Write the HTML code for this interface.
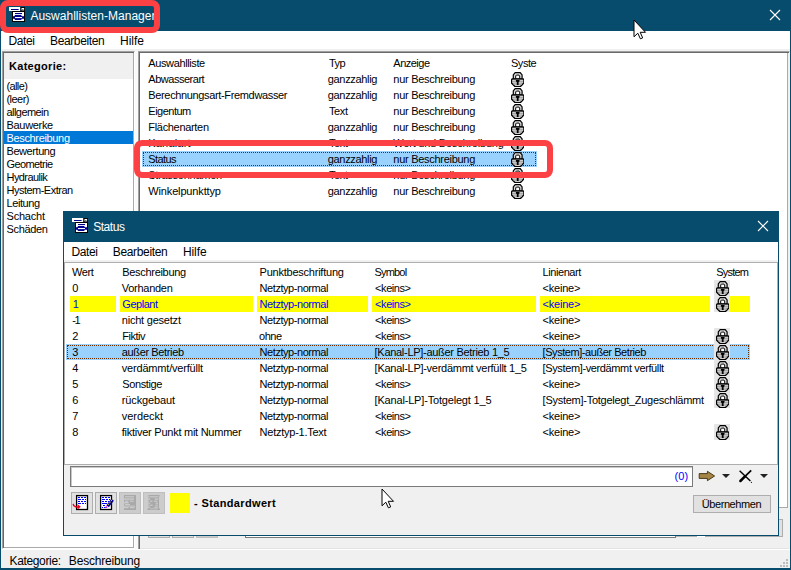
<!DOCTYPE html>
<html lang="de"><head><meta charset="utf-8"><title>Auswahllisten-Manager</title>
<style>
html,body{margin:0;padding:0}
body{width:791px;height:570px;overflow:hidden;position:relative;background:#f0f0f0;font-family:"Liberation Sans",sans-serif;color:#000}
div,svg{position:absolute;box-sizing:border-box}
.t{white-space:nowrap}
.l{font-size:11px;line-height:16px;height:16px}
.k{font-size:11px;line-height:13px;height:13px}
.m{font-size:12px;line-height:20px;height:20px}
.tt{font-size:12px;line-height:31px;height:31px;color:#fff}
.b{font-weight:bold}
.blue{color:#0000ff}
.sunk{border:1px solid;border-color:#a0a0a0 #fff #fff #a0a0a0;box-shadow:inset 1px 1px 0 #696969,inset -1px -1px 0 #e3e3e3;background:#fff}
.btn{background:#e1e1e1;border:1px solid #adadad}
.btnd{background:#cccccc;border:1px solid #bfbfbf}
.y{background:#ffff00;height:16px}
</style></head><body>

<div style="left:0;top:0;width:791px;height:570px;border:1px solid #084c6d;border-top:0;border-bottom-width:2px"></div>
<div style="left:0;top:0;width:791px;height:31px;background:#084c6d"></div>
<svg style="left:9.4px;top:7.2px" width="16" height="15" viewBox="0 0 16 15">
<rect x="0" y="0" width="11.2" height="4" fill="#fff"/>
<rect x="2" y="2" width="7.6" height="1" fill="#00008b"/>
<rect x="11.5" y="0" width="4.5" height="4.2" fill="#000"/><rect x="12.5" y="1" width="2.6" height="2.4" fill="#fff"/><rect x="13.5" y="2" width="0.8" height="1" fill="#000"/>
<rect x="3" y="4" width="13" height="11" fill="#000"/>
<rect x="4" y="5" width="11" height="9" fill="#fff"/>
<rect x="6" y="6" width="7" height="1.1" fill="#00008b"/>
<path d="M6.2 8 H12 L13 9.2 H15 V11.8 H13 L12 13 H6.2 L5.2 11.8 H4 V9.2 H5.2 Z" fill="#00008b"/>
<rect x="6" y="10" width="7" height="1.1" fill="#fff"/>
</svg>
<div class="t tt" style="left:30.40px;top:1px;letter-spacing:0.018px;">Auswahllisten-Manager</div>
<svg style="left:769px;top:9px" width="12" height="12" viewBox="0 0 12 12"><path d="M1 1 L11 11 M11 1 L1 11" stroke="#fff" stroke-width="1.1" fill="none"/></svg>
<div style="left:1px;top:31px;width:789px;height:18px;background:#fff"></div>
<div class="t m" style="left:8.60px;top:31px;letter-spacing:-0.437px;">Datei</div>
<div class="t m" style="left:50.00px;top:31px;letter-spacing:-0.374px;">Bearbeiten</div>
<div class="t m" style="left:120.00px;top:31px;letter-spacing:-0.033px;">Hilfe</div>
<div style="left:2px;top:51px;width:133px;height:498px;background:#fff;border:1px solid;border-color:#a0a0a0 #fff #fff #a0a0a0;box-shadow:inset 1px 1px 0 #696969,inset -1px -1px 0 #aaa"></div>
<div style="left:4px;top:53px;width:129px;height:26px;background:#f0f0f0"></div>
<div class="t l b" style="left:9.00px;top:58px;letter-spacing:0.296px;">Kategorie:</div>
<div class="t k" style="left:6.50px;top:80px;letter-spacing:-0.617px;">(alle)</div>
<div class="t k" style="left:6.50px;top:93px;letter-spacing:-0.541px;">(leer)</div>
<div class="t k" style="left:6.50px;top:106px;letter-spacing:-0.558px;">allgemein</div>
<div class="t k" style="left:6.50px;top:119px;letter-spacing:-0.314px;">Bauwerke</div>
<div style="left:4px;top:131px;width:129px;height:13px;background:#0078d7"></div>
<div class="t k" style="left:6.50px;top:132px;letter-spacing:-0.341px;color:#fff">Beschreibung</div>
<div class="t k" style="left:6.50px;top:145px;letter-spacing:-0.434px;">Bewertung</div>
<div class="t k" style="left:6.50px;top:158px;letter-spacing:-0.592px;">Geometrie</div>
<div class="t k" style="left:6.50px;top:171px;letter-spacing:-0.568px;">Hydraulik</div>
<div class="t k" style="left:6.50px;top:184px;letter-spacing:-0.510px;">Hystem-Extran</div>
<div class="t k" style="left:6.50px;top:197px;letter-spacing:-0.412px;">Leitung</div>
<div class="t k" style="left:6.50px;top:210px;letter-spacing:-0.198px;">Schacht</div>
<div class="t k" style="left:6.50px;top:223px;letter-spacing:-0.335px;">Schäden</div>
<div style="left:135px;top:51px;width:3px;height:498px;background:#fafafa"></div>
<div style="left:138px;top:51px;width:652px;height:499px;background:#f0f0f0;border:1px solid;border-color:#a0a0a0 #f0f0f0 #fff #a0a0a0;box-shadow:inset 1px 1px 0 #696969,inset 0 -1px 0 #e3e3e3"></div>
<div style="left:140px;top:53px;width:648px;height:455px;background:#fff;border-right:1px solid #aaa;border-bottom:1px solid #aaa"></div>
<div class="t l" style="left:148.30px;top:55px;letter-spacing:-0.384px;">Auswahlliste</div>
<div class="t l" style="left:328.90px;top:55px;letter-spacing:-0.556px;">Typ</div>
<div class="t l" style="left:393.30px;top:55px;letter-spacing:-0.506px;">Anzeige</div>
<div class="t l" style="left:511.00px;top:55px;letter-spacing:-0.473px;">Syste</div>
<div class="t l" style="left:148.30px;top:71px;letter-spacing:-0.478px;">Abwasserart</div>
<div class="t l" style="left:327.80px;top:71px;letter-spacing:-0.331px;">ganzzahlig</div>
<div class="t l" style="left:393.30px;top:71px;letter-spacing:-0.280px;">nur Beschreibung</div>
<svg style="left:510.7px;top:71.7px" width="13.4" height="15.4" viewBox="0 0 13.4 15.4">
<path d="M2.3 7 V3 L4.2 0.6 H9.2 L11.1 3 V7 Z" fill="#d8d8d8" stroke="#000" stroke-width="1.2"/>
<path d="M4.7 7 V3.9 L5.4 3.1 H8 L8.7 3.9 V7 Z" fill="#fff" stroke="#000" stroke-width="1"/>
<path d="M1.2 6.8 H12.2 L12.9 8 V11 L11.2 12.9 L9.4 14.6 H4 L2.2 12.9 L0.5 11 V8 Z" fill="#989898" stroke="#000" stroke-width="1.3"/>
<path d="M1.3 8.6 H12.1 M1.3 10.3 H12.1 M2.6 12 H10.8 M4.2 13.5 H9.2" stroke="#dedede" stroke-width="0.8"/>
<path d="M4.9 8.1 H8.5 V9.4 L7.6 10 V12.9 H5.8 V10 L4.9 9.4 Z" fill="#000"/>
</svg>
<div class="t l" style="left:148.30px;top:87px;letter-spacing:-0.351px;">Berechnungsart-Fremdwasser</div>
<div class="t l" style="left:327.80px;top:87px;letter-spacing:-0.331px;">ganzzahlig</div>
<div class="t l" style="left:393.30px;top:87px;letter-spacing:-0.280px;">nur Beschreibung</div>
<svg style="left:510.7px;top:87.7px" width="13.4" height="15.4" viewBox="0 0 13.4 15.4">
<path d="M2.3 7 V3 L4.2 0.6 H9.2 L11.1 3 V7 Z" fill="#d8d8d8" stroke="#000" stroke-width="1.2"/>
<path d="M4.7 7 V3.9 L5.4 3.1 H8 L8.7 3.9 V7 Z" fill="#fff" stroke="#000" stroke-width="1"/>
<path d="M1.2 6.8 H12.2 L12.9 8 V11 L11.2 12.9 L9.4 14.6 H4 L2.2 12.9 L0.5 11 V8 Z" fill="#989898" stroke="#000" stroke-width="1.3"/>
<path d="M1.3 8.6 H12.1 M1.3 10.3 H12.1 M2.6 12 H10.8 M4.2 13.5 H9.2" stroke="#dedede" stroke-width="0.8"/>
<path d="M4.9 8.1 H8.5 V9.4 L7.6 10 V12.9 H5.8 V10 L4.9 9.4 Z" fill="#000"/>
</svg>
<div class="t l" style="left:148.30px;top:103px;letter-spacing:-0.501px;">Eigentum</div>
<div class="t l" style="left:328.90px;top:103px;letter-spacing:-0.339px;">Text</div>
<div class="t l" style="left:393.30px;top:103px;letter-spacing:-0.280px;">nur Beschreibung</div>
<svg style="left:510.7px;top:103.7px" width="13.4" height="15.4" viewBox="0 0 13.4 15.4">
<path d="M2.3 7 V3 L4.2 0.6 H9.2 L11.1 3 V7 Z" fill="#d8d8d8" stroke="#000" stroke-width="1.2"/>
<path d="M4.7 7 V3.9 L5.4 3.1 H8 L8.7 3.9 V7 Z" fill="#fff" stroke="#000" stroke-width="1"/>
<path d="M1.2 6.8 H12.2 L12.9 8 V11 L11.2 12.9 L9.4 14.6 H4 L2.2 12.9 L0.5 11 V8 Z" fill="#989898" stroke="#000" stroke-width="1.3"/>
<path d="M1.3 8.6 H12.1 M1.3 10.3 H12.1 M2.6 12 H10.8 M4.2 13.5 H9.2" stroke="#dedede" stroke-width="0.8"/>
<path d="M4.9 8.1 H8.5 V9.4 L7.6 10 V12.9 H5.8 V10 L4.9 9.4 Z" fill="#000"/>
</svg>
<div class="t l" style="left:148.30px;top:119px;letter-spacing:-0.317px;">Flächenarten</div>
<div class="t l" style="left:327.80px;top:119px;letter-spacing:-0.331px;">ganzzahlig</div>
<div class="t l" style="left:393.30px;top:119px;letter-spacing:-0.280px;">nur Beschreibung</div>
<svg style="left:510.7px;top:119.7px" width="13.4" height="15.4" viewBox="0 0 13.4 15.4">
<path d="M2.3 7 V3 L4.2 0.6 H9.2 L11.1 3 V7 Z" fill="#d8d8d8" stroke="#000" stroke-width="1.2"/>
<path d="M4.7 7 V3.9 L5.4 3.1 H8 L8.7 3.9 V7 Z" fill="#fff" stroke="#000" stroke-width="1"/>
<path d="M1.2 6.8 H12.2 L12.9 8 V11 L11.2 12.9 L9.4 14.6 H4 L2.2 12.9 L0.5 11 V8 Z" fill="#989898" stroke="#000" stroke-width="1.3"/>
<path d="M1.3 8.6 H12.1 M1.3 10.3 H12.1 M2.6 12 H10.8 M4.2 13.5 H9.2" stroke="#dedede" stroke-width="0.8"/>
<path d="M4.9 8.1 H8.5 V9.4 L7.6 10 V12.9 H5.8 V10 L4.9 9.4 Z" fill="#000"/>
</svg>
<div class="t l" style="left:148.30px;top:135px;letter-spacing:0.184px;">Kanalart</div>
<div class="t l" style="left:328.90px;top:135px;letter-spacing:-0.339px;">Text</div>
<div class="t l" style="left:393.30px;top:135px;letter-spacing:-0.212px;">Wert und Beschreibung</div>
<svg style="left:510.7px;top:135.7px" width="13.4" height="15.4" viewBox="0 0 13.4 15.4">
<path d="M2.3 7 V3 L4.2 0.6 H9.2 L11.1 3 V7 Z" fill="#d8d8d8" stroke="#000" stroke-width="1.2"/>
<path d="M4.7 7 V3.9 L5.4 3.1 H8 L8.7 3.9 V7 Z" fill="#fff" stroke="#000" stroke-width="1"/>
<path d="M1.2 6.8 H12.2 L12.9 8 V11 L11.2 12.9 L9.4 14.6 H4 L2.2 12.9 L0.5 11 V8 Z" fill="#989898" stroke="#000" stroke-width="1.3"/>
<path d="M1.3 8.6 H12.1 M1.3 10.3 H12.1 M2.6 12 H10.8 M4.2 13.5 H9.2" stroke="#dedede" stroke-width="0.8"/>
<path d="M4.9 8.1 H8.5 V9.4 L7.6 10 V12.9 H5.8 V10 L4.9 9.4 Z" fill="#000"/>
</svg>
<div style="left:142px;top:151px;width:395px;height:16px;background:#99d1ff"></div><div style="left:143px;top:152px;width:393px;height:14px;border:1px dotted #662e00"></div>
<div class="t l" style="left:148.30px;top:151px;letter-spacing:-0.577px;">Status</div>
<div class="t l" style="left:327.80px;top:151px;letter-spacing:-0.331px;">ganzzahlig</div>
<div class="t l" style="left:393.30px;top:151px;letter-spacing:-0.280px;">nur Beschreibung</div>
<svg style="left:510.7px;top:151.7px" width="13.4" height="15.4" viewBox="0 0 13.4 15.4">
<path d="M2.3 7 V3 L4.2 0.6 H9.2 L11.1 3 V7 Z" fill="#d8d8d8" stroke="#000" stroke-width="1.2"/>
<path d="M4.7 7 V3.9 L5.4 3.1 H8 L8.7 3.9 V7 Z" fill="#fff" stroke="#000" stroke-width="1"/>
<path d="M1.2 6.8 H12.2 L12.9 8 V11 L11.2 12.9 L9.4 14.6 H4 L2.2 12.9 L0.5 11 V8 Z" fill="#989898" stroke="#000" stroke-width="1.3"/>
<path d="M1.3 8.6 H12.1 M1.3 10.3 H12.1 M2.6 12 H10.8 M4.2 13.5 H9.2" stroke="#dedede" stroke-width="0.8"/>
<path d="M4.9 8.1 H8.5 V9.4 L7.6 10 V12.9 H5.8 V10 L4.9 9.4 Z" fill="#000"/>
</svg>
<div class="t l" style="left:148.30px;top:167px;letter-spacing:-0.269px;">Strassennamen</div>
<div class="t l" style="left:328.90px;top:167px;letter-spacing:-0.339px;">Text</div>
<div class="t l" style="left:393.30px;top:167px;letter-spacing:-0.280px;">nur Beschreibung</div>
<svg style="left:510.7px;top:167.7px" width="13.4" height="15.4" viewBox="0 0 13.4 15.4">
<path d="M2.3 7 V3 L4.2 0.6 H9.2 L11.1 3 V7 Z" fill="#d8d8d8" stroke="#000" stroke-width="1.2"/>
<path d="M4.7 7 V3.9 L5.4 3.1 H8 L8.7 3.9 V7 Z" fill="#fff" stroke="#000" stroke-width="1"/>
<path d="M1.2 6.8 H12.2 L12.9 8 V11 L11.2 12.9 L9.4 14.6 H4 L2.2 12.9 L0.5 11 V8 Z" fill="#989898" stroke="#000" stroke-width="1.3"/>
<path d="M1.3 8.6 H12.1 M1.3 10.3 H12.1 M2.6 12 H10.8 M4.2 13.5 H9.2" stroke="#dedede" stroke-width="0.8"/>
<path d="M4.9 8.1 H8.5 V9.4 L7.6 10 V12.9 H5.8 V10 L4.9 9.4 Z" fill="#000"/>
</svg>
<div class="t l" style="left:148.30px;top:183px;letter-spacing:-0.152px;">Winkelpunkttyp</div>
<div class="t l" style="left:327.80px;top:183px;letter-spacing:-0.331px;">ganzzahlig</div>
<div class="t l" style="left:393.30px;top:183px;letter-spacing:-0.280px;">nur Beschreibung</div>
<svg style="left:510.7px;top:183.7px" width="13.4" height="15.4" viewBox="0 0 13.4 15.4">
<path d="M2.3 7 V3 L4.2 0.6 H9.2 L11.1 3 V7 Z" fill="#d8d8d8" stroke="#000" stroke-width="1.2"/>
<path d="M4.7 7 V3.9 L5.4 3.1 H8 L8.7 3.9 V7 Z" fill="#fff" stroke="#000" stroke-width="1"/>
<path d="M1.2 6.8 H12.2 L12.9 8 V11 L11.2 12.9 L9.4 14.6 H4 L2.2 12.9 L0.5 11 V8 Z" fill="#989898" stroke="#000" stroke-width="1.3"/>
<path d="M1.3 8.6 H12.1 M1.3 10.3 H12.1 M2.6 12 H10.8 M4.2 13.5 H9.2" stroke="#dedede" stroke-width="0.8"/>
<path d="M4.9 8.1 H8.5 V9.4 L7.6 10 V12.9 H5.8 V10 L4.9 9.4 Z" fill="#000"/>
</svg>
<div style="left:134.4px;top:140px;width:418.8px;height:38px;border:6px solid #fb4144;border-radius:8px"></div>
<div class="btn" style="left:148px;top:516px;width:22px;height:22px"></div>
<div class="btn" style="left:172px;top:516px;width:22px;height:22px"></div>
<div class="btnd" style="left:196px;top:516px;width:22px;height:22px"></div>
<div style="left:245px;top:517px;width:431px;height:21px;background:#fff;border:1px solid #7a7a7a"></div>
<div class="btn" style="left:705px;top:519px;width:78px;height:18px"></div>
<div style="left:676px;top:536px;width:21px;height:1px;background:#b4b4b4"></div>
<div style="left:697px;top:536px;width:8px;height:1px;background:#fff"></div>
<div style="left:1px;top:549px;width:789px;height:1px;background:#fff"></div>
<div class="t m" style="left:9.50px;top:551px;letter-spacing:-0.352px;">Kategorie:</div>
<div class="t m" style="left:68.80px;top:551px;letter-spacing:-0.174px;">Beschreibung</div>
<svg style="left:779px;top:558px" width="10" height="10" viewBox="0 0 10 10" shape-rendering="crispEdges"><g fill="#bdbdbd"><rect x="7" y="1" width="2" height="2"/><rect x="4" y="4" width="2" height="2"/><rect x="7" y="4" width="2" height="2"/><rect x="1" y="7" width="2" height="2"/><rect x="4" y="7" width="2" height="2"/><rect x="7" y="7" width="2" height="2"/></g></svg>
<div style="left:63px;top:211px;width:716px;height:325px;background:#f0f0f0;border:1px solid #084c6d"></div>
<div style="left:63px;top:211px;width:716px;height:31px;background:#084c6d"></div>
<svg style="left:72px;top:218px" width="16" height="15" viewBox="0 0 16 15">
<rect x="0" y="0" width="11.2" height="4" fill="#fff"/>
<rect x="2" y="2" width="7.6" height="1" fill="#00008b"/>
<rect x="11.5" y="0" width="4.5" height="4.2" fill="#000"/><rect x="12.5" y="1" width="2.6" height="2.4" fill="#fff"/><rect x="13.5" y="2" width="0.8" height="1" fill="#000"/>
<rect x="3" y="4" width="13" height="11" fill="#000"/>
<rect x="4" y="5" width="11" height="9" fill="#fff"/>
<rect x="6" y="6" width="7" height="1.1" fill="#00008b"/>
<path d="M6.2 8 H12 L13 9.2 H15 V11.8 H13 L12 13 H6.2 L5.2 11.8 H4 V9.2 H5.2 Z" fill="#00008b"/>
<rect x="6" y="10" width="7" height="1.1" fill="#fff"/>
</svg>
<div class="t tt" style="left:93.20px;top:212px;letter-spacing:-0.464px;">Status</div>
<svg style="left:757px;top:220px" width="12" height="12" viewBox="0 0 12 12"><path d="M1 1 L11 11 M11 1 L1 11" stroke="#fff" stroke-width="1.1" fill="none"/></svg>
<div style="left:64px;top:242px;width:714px;height:18px;background:#fff"></div>
<div class="t m" style="left:71.50px;top:242px;letter-spacing:-0.387px;">Datei</div>
<div class="t m" style="left:112.80px;top:242px;letter-spacing:-0.352px;">Bearbeiten</div>
<div class="t m" style="left:182.90px;top:242px;letter-spacing:-0.058px;">Hilfe</div>
<div style="left:64px;top:262px;width:714px;height:203px;background:#fff;border:1px solid #aeaeae"></div>
<div class="t l" style="left:72.00px;top:264px;letter-spacing:-0.388px;">Wert</div>
<div class="t l" style="left:122.30px;top:264px;letter-spacing:-0.314px;">Beschreibung</div>
<div class="t l" style="left:259.60px;top:264px;letter-spacing:-0.234px;">Punktbeschriftung</div>
<div class="t l" style="left:374.40px;top:264px;letter-spacing:-0.787px;">Symbol</div>
<div class="t l" style="left:542.60px;top:264px;letter-spacing:-0.430px;">Linienart</div>
<div class="t l" style="left:716.30px;top:264px;letter-spacing:-0.802px;">System</div>
<div class="t l" style="left:72.20px;top:280px;">0</div>
<div class="t l" style="left:121.80px;top:280px;letter-spacing:-0.275px;">Vorhanden</div>
<div class="t l" style="left:259.60px;top:280px;letter-spacing:-0.441px;">Netztyp-normal</div>
<div class="t l" style="left:375.10px;top:280px;letter-spacing:-0.434px;">&lt;keins&gt;</div>
<div class="t l" style="left:542.60px;top:280px;letter-spacing:-0.220px;">&lt;keine&gt;</div>
<div style="left:714px;top:280px;width:16px;height:16px;background:#e6e6e6"></div>
<svg style="left:715.9px;top:280.8px" width="13.4" height="15.4" viewBox="0 0 13.4 15.4">
<path d="M2.3 7 V3 L4.2 0.6 H9.2 L11.1 3 V7 Z" fill="#d8d8d8" stroke="#000" stroke-width="1.2"/>
<path d="M4.7 7 V3.9 L5.4 3.1 H8 L8.7 3.9 V7 Z" fill="#fff" stroke="#000" stroke-width="1"/>
<path d="M1.2 6.8 H12.2 L12.9 8 V11 L11.2 12.9 L9.4 14.6 H4 L2.2 12.9 L0.5 11 V8 Z" fill="#989898" stroke="#000" stroke-width="1.3"/>
<path d="M1.3 8.6 H12.1 M1.3 10.3 H12.1 M2.6 12 H10.8 M4.2 13.5 H9.2" stroke="#dedede" stroke-width="0.8"/>
<path d="M4.9 8.1 H8.5 V9.4 L7.6 10 V12.9 H5.8 V10 L4.9 9.4 Z" fill="#000"/>
</svg>
<div class="y" style="left:70px;top:296px;width:46px"></div>
<div class="y" style="left:120px;top:296px;width:133px"></div>
<div class="y" style="left:257px;top:296px;width:111px"></div>
<div class="y" style="left:372px;top:296px;width:164px"></div>
<div class="y" style="left:540px;top:296px;width:170px"></div>
<div class="y" style="left:714px;top:296px;width:36px"></div>
<div class="t l blue" style="left:72.70px;top:296px;">1</div>
<div class="t l blue" style="left:122.30px;top:296px;letter-spacing:-0.462px;">Geplant</div>
<div class="t l blue" style="left:259.60px;top:296px;letter-spacing:-0.441px;">Netztyp-normal</div>
<div class="t l blue" style="left:375.10px;top:296px;letter-spacing:-0.434px;">&lt;keins&gt;</div>
<div class="t l blue" style="left:542.60px;top:296px;letter-spacing:-0.220px;">&lt;keine&gt;</div>
<div style="left:714px;top:296px;width:16px;height:16px;background:#e6e6e6"></div>
<svg style="left:715.9px;top:296.8px" width="13.4" height="15.4" viewBox="0 0 13.4 15.4">
<path d="M2.3 7 V3 L4.2 0.6 H9.2 L11.1 3 V7 Z" fill="#d8d8d8" stroke="#000" stroke-width="1.2"/>
<path d="M4.7 7 V3.9 L5.4 3.1 H8 L8.7 3.9 V7 Z" fill="#fff" stroke="#000" stroke-width="1"/>
<path d="M1.2 6.8 H12.2 L12.9 8 V11 L11.2 12.9 L9.4 14.6 H4 L2.2 12.9 L0.5 11 V8 Z" fill="#989898" stroke="#000" stroke-width="1.3"/>
<path d="M1.3 8.6 H12.1 M1.3 10.3 H12.1 M2.6 12 H10.8 M4.2 13.5 H9.2" stroke="#dedede" stroke-width="0.8"/>
<path d="M4.9 8.1 H8.5 V9.4 L7.6 10 V12.9 H5.8 V10 L4.9 9.4 Z" fill="#000"/>
</svg>
<div class="t l" style="left:72.20px;top:312px;letter-spacing:-1.263px;">-1</div>
<div class="t l" style="left:121.80px;top:312px;letter-spacing:-0.217px;">nicht gesetzt</div>
<div class="t l" style="left:259.60px;top:312px;letter-spacing:-0.441px;">Netztyp-normal</div>
<div class="t l" style="left:375.10px;top:312px;letter-spacing:-0.434px;">&lt;keins&gt;</div>
<div class="t l" style="left:542.60px;top:312px;letter-spacing:-0.220px;">&lt;keine&gt;</div>
<div class="t l" style="left:72.20px;top:328px;">2</div>
<div class="t l" style="left:122.30px;top:328px;letter-spacing:-0.493px;">Fiktiv</div>
<div class="t l" style="left:259.00px;top:328px;letter-spacing:-0.451px;">ohne</div>
<div class="t l" style="left:375.10px;top:328px;letter-spacing:-0.434px;">&lt;keins&gt;</div>
<div class="t l" style="left:542.60px;top:328px;letter-spacing:-0.220px;">&lt;keine&gt;</div>
<div style="left:714px;top:328px;width:16px;height:16px;background:#e6e6e6"></div>
<svg style="left:715.9px;top:328.8px" width="13.4" height="15.4" viewBox="0 0 13.4 15.4">
<path d="M2.3 7 V3 L4.2 0.6 H9.2 L11.1 3 V7 Z" fill="#d8d8d8" stroke="#000" stroke-width="1.2"/>
<path d="M4.7 7 V3.9 L5.4 3.1 H8 L8.7 3.9 V7 Z" fill="#fff" stroke="#000" stroke-width="1"/>
<path d="M1.2 6.8 H12.2 L12.9 8 V11 L11.2 12.9 L9.4 14.6 H4 L2.2 12.9 L0.5 11 V8 Z" fill="#989898" stroke="#000" stroke-width="1.3"/>
<path d="M1.3 8.6 H12.1 M1.3 10.3 H12.1 M2.6 12 H10.8 M4.2 13.5 H9.2" stroke="#dedede" stroke-width="0.8"/>
<path d="M4.9 8.1 H8.5 V9.4 L7.6 10 V12.9 H5.8 V10 L4.9 9.4 Z" fill="#000"/>
</svg>
<div style="left:66px;top:344px;width:684px;height:16px;background:#99d1ff"></div><div style="left:67px;top:345px;width:682px;height:14px;border:1px dotted #662e00"></div>
<div class="t l" style="left:72.20px;top:344px;">3</div>
<div class="t l" style="left:121.80px;top:344px;letter-spacing:-0.369px;">außer Betrieb</div>
<div class="t l" style="left:259.60px;top:344px;letter-spacing:-0.441px;">Netztyp-normal</div>
<div class="t l" style="left:374.60px;top:344px;letter-spacing:-0.295px;">[Kanal-LP]-außer Betrieb 1_5</div>
<div class="t l" style="left:542.60px;top:344px;letter-spacing:-0.442px;">[System]-außer Betrieb</div>
<div style="left:714px;top:344px;width:16px;height:16px;background:#e6e6e6"></div>
<svg style="left:715.9px;top:344.8px" width="13.4" height="15.4" viewBox="0 0 13.4 15.4">
<path d="M2.3 7 V3 L4.2 0.6 H9.2 L11.1 3 V7 Z" fill="#d8d8d8" stroke="#000" stroke-width="1.2"/>
<path d="M4.7 7 V3.9 L5.4 3.1 H8 L8.7 3.9 V7 Z" fill="#fff" stroke="#000" stroke-width="1"/>
<path d="M1.2 6.8 H12.2 L12.9 8 V11 L11.2 12.9 L9.4 14.6 H4 L2.2 12.9 L0.5 11 V8 Z" fill="#989898" stroke="#000" stroke-width="1.3"/>
<path d="M1.3 8.6 H12.1 M1.3 10.3 H12.1 M2.6 12 H10.8 M4.2 13.5 H9.2" stroke="#dedede" stroke-width="0.8"/>
<path d="M4.9 8.1 H8.5 V9.4 L7.6 10 V12.9 H5.8 V10 L4.9 9.4 Z" fill="#000"/>
</svg>
<div class="t l" style="left:72.20px;top:360px;">4</div>
<div class="t l" style="left:121.80px;top:360px;letter-spacing:-0.194px;">verdämmt/verfüllt</div>
<div class="t l" style="left:259.60px;top:360px;letter-spacing:-0.441px;">Netztyp-normal</div>
<div class="t l" style="left:374.60px;top:360px;letter-spacing:-0.273px;">[Kanal-LP]-verdämmt verfüllt 1_5</div>
<div class="t l" style="left:542.60px;top:360px;letter-spacing:-0.374px;">[System]-verdämmt verfüllt</div>
<div style="left:714px;top:360px;width:16px;height:16px;background:#e6e6e6"></div>
<svg style="left:715.9px;top:360.8px" width="13.4" height="15.4" viewBox="0 0 13.4 15.4">
<path d="M2.3 7 V3 L4.2 0.6 H9.2 L11.1 3 V7 Z" fill="#d8d8d8" stroke="#000" stroke-width="1.2"/>
<path d="M4.7 7 V3.9 L5.4 3.1 H8 L8.7 3.9 V7 Z" fill="#fff" stroke="#000" stroke-width="1"/>
<path d="M1.2 6.8 H12.2 L12.9 8 V11 L11.2 12.9 L9.4 14.6 H4 L2.2 12.9 L0.5 11 V8 Z" fill="#989898" stroke="#000" stroke-width="1.3"/>
<path d="M1.3 8.6 H12.1 M1.3 10.3 H12.1 M2.6 12 H10.8 M4.2 13.5 H9.2" stroke="#dedede" stroke-width="0.8"/>
<path d="M4.9 8.1 H8.5 V9.4 L7.6 10 V12.9 H5.8 V10 L4.9 9.4 Z" fill="#000"/>
</svg>
<div class="t l" style="left:72.20px;top:376px;">5</div>
<div class="t l" style="left:122.30px;top:376px;letter-spacing:-0.384px;">Sonstige</div>
<div class="t l" style="left:259.60px;top:376px;letter-spacing:-0.441px;">Netztyp-normal</div>
<div class="t l" style="left:375.10px;top:376px;letter-spacing:-0.434px;">&lt;keins&gt;</div>
<div class="t l" style="left:542.60px;top:376px;letter-spacing:-0.220px;">&lt;keine&gt;</div>
<div style="left:714px;top:376px;width:16px;height:16px;background:#e6e6e6"></div>
<svg style="left:715.9px;top:376.8px" width="13.4" height="15.4" viewBox="0 0 13.4 15.4">
<path d="M2.3 7 V3 L4.2 0.6 H9.2 L11.1 3 V7 Z" fill="#d8d8d8" stroke="#000" stroke-width="1.2"/>
<path d="M4.7 7 V3.9 L5.4 3.1 H8 L8.7 3.9 V7 Z" fill="#fff" stroke="#000" stroke-width="1"/>
<path d="M1.2 6.8 H12.2 L12.9 8 V11 L11.2 12.9 L9.4 14.6 H4 L2.2 12.9 L0.5 11 V8 Z" fill="#989898" stroke="#000" stroke-width="1.3"/>
<path d="M1.3 8.6 H12.1 M1.3 10.3 H12.1 M2.6 12 H10.8 M4.2 13.5 H9.2" stroke="#dedede" stroke-width="0.8"/>
<path d="M4.9 8.1 H8.5 V9.4 L7.6 10 V12.9 H5.8 V10 L4.9 9.4 Z" fill="#000"/>
</svg>
<div class="t l" style="left:72.20px;top:392px;">6</div>
<div class="t l" style="left:121.80px;top:392px;letter-spacing:-0.130px;">rückgebaut</div>
<div class="t l" style="left:259.60px;top:392px;letter-spacing:-0.441px;">Netztyp-normal</div>
<div class="t l" style="left:374.60px;top:392px;letter-spacing:-0.181px;">[Kanal-LP]-Totgelegt 1_5</div>
<div class="t l" style="left:542.60px;top:392px;letter-spacing:-0.263px;">[System]-Totgelegt_Zugeschlämmt</div>
<div style="left:714px;top:392px;width:16px;height:16px;background:#e6e6e6"></div>
<svg style="left:715.9px;top:392.8px" width="13.4" height="15.4" viewBox="0 0 13.4 15.4">
<path d="M2.3 7 V3 L4.2 0.6 H9.2 L11.1 3 V7 Z" fill="#d8d8d8" stroke="#000" stroke-width="1.2"/>
<path d="M4.7 7 V3.9 L5.4 3.1 H8 L8.7 3.9 V7 Z" fill="#fff" stroke="#000" stroke-width="1"/>
<path d="M1.2 6.8 H12.2 L12.9 8 V11 L11.2 12.9 L9.4 14.6 H4 L2.2 12.9 L0.5 11 V8 Z" fill="#989898" stroke="#000" stroke-width="1.3"/>
<path d="M1.3 8.6 H12.1 M1.3 10.3 H12.1 M2.6 12 H10.8 M4.2 13.5 H9.2" stroke="#dedede" stroke-width="0.8"/>
<path d="M4.9 8.1 H8.5 V9.4 L7.6 10 V12.9 H5.8 V10 L4.9 9.4 Z" fill="#000"/>
</svg>
<div class="t l" style="left:72.20px;top:408px;">7</div>
<div class="t l" style="left:121.80px;top:408px;letter-spacing:-0.045px;">verdeckt</div>
<div class="t l" style="left:259.60px;top:408px;letter-spacing:-0.441px;">Netztyp-normal</div>
<div class="t l" style="left:375.10px;top:408px;letter-spacing:-0.434px;">&lt;keins&gt;</div>
<div class="t l" style="left:542.60px;top:408px;letter-spacing:-0.220px;">&lt;keine&gt;</div>
<div class="t l" style="left:72.20px;top:424px;">8</div>
<div class="t l" style="left:121.80px;top:424px;letter-spacing:-0.256px;">fiktiver Punkt mit Nummer</div>
<div class="t l" style="left:259.60px;top:424px;letter-spacing:-0.250px;">Netztyp-1.Text</div>
<div class="t l" style="left:375.10px;top:424px;letter-spacing:-0.434px;">&lt;keins&gt;</div>
<div class="t l" style="left:542.60px;top:424px;letter-spacing:-0.220px;">&lt;keine&gt;</div>
<div style="left:714px;top:424px;width:16px;height:16px;background:#e6e6e6"></div>
<svg style="left:715.9px;top:424.8px" width="13.4" height="15.4" viewBox="0 0 13.4 15.4">
<path d="M2.3 7 V3 L4.2 0.6 H9.2 L11.1 3 V7 Z" fill="#d8d8d8" stroke="#000" stroke-width="1.2"/>
<path d="M4.7 7 V3.9 L5.4 3.1 H8 L8.7 3.9 V7 Z" fill="#fff" stroke="#000" stroke-width="1"/>
<path d="M1.2 6.8 H12.2 L12.9 8 V11 L11.2 12.9 L9.4 14.6 H4 L2.2 12.9 L0.5 11 V8 Z" fill="#989898" stroke="#000" stroke-width="1.3"/>
<path d="M1.3 8.6 H12.1 M1.3 10.3 H12.1 M2.6 12 H10.8 M4.2 13.5 H9.2" stroke="#dedede" stroke-width="0.8"/>
<path d="M4.9 8.1 H8.5 V9.4 L7.6 10 V12.9 H5.8 V10 L4.9 9.4 Z" fill="#000"/>
</svg>
<div style="left:70px;top:466px;width:623px;height:21px;background:#fff;border:1px solid #7a7a7a;box-shadow:inset 1px 1px 0 #c8c8c8"></div>
<div class="t l" style="left:674.60px;top:468px;letter-spacing:0.010px;color:#0000ff">(0)</div>
<svg style="left:698px;top:470px" width="18" height="12" viewBox="0 0 18 12">
<path d="M1.2 3.6 H9.4 V1.3 L16.6 6 L9.4 10.7 V8.4 H1.2 Z" fill="#a58545" stroke="#4a3a1a" stroke-width="1"/>
</svg>
<svg style="left:721.7px;top:474px" width="8" height="4" viewBox="0 0 8 4"><path d="M0 0 H8 L4 4 Z" fill="#222"/></svg>
<svg style="left:738px;top:469px" width="15" height="14" viewBox="0 0 15 14">
<path d="M1.6 1.8 L12.4 12" stroke="#000" stroke-width="1.4" fill="none"/>
<path d="M13.2 1.4 L6 8.4" stroke="#000" stroke-width="1.7" fill="none"/>
<path d="M7 7.4 L2.4 12" stroke="#000" stroke-width="2.5" stroke-linecap="round" fill="none"/>
<circle cx="13.4" cy="13.3" r="0.6" fill="#000"/>
</svg>
<svg style="left:759.6px;top:474px" width="8" height="4" viewBox="0 0 8 4"><path d="M0 0 H8 L4 4 Z" fill="#222"/></svg>
<div class="btn" style="left:71px;top:492px;width:22px;height:22px"></div>
<div class="btn" style="left:95px;top:492px;width:22px;height:22px"></div>
<div class="btnd" style="left:119px;top:492px;width:22px;height:22px"></div>
<div class="btnd" style="left:143px;top:492px;width:22px;height:22px"></div>
<svg style="left:71px;top:492px" width="22" height="22" viewBox="0 0 22 22">
<rect x="5.6" y="3.6" width="10.9" height="13.9" fill="#fff" stroke="#000" stroke-width="1.3"/>
<g fill="#0000ff" shape-rendering="crispEdges"><rect x="6.8" y="5" width="2.2" height="1"/><rect x="9.8" y="5" width="2.2" height="1"/><rect x="12.8" y="5" width="2.4" height="1"/><rect x="7.3999999999999995" y="7" width="2.4" height="1"/><rect x="10.6" y="7" width="2.2" height="1"/><rect x="13.6" y="7" width="1.8" height="1"/><rect x="6.8" y="9" width="2.2" height="1"/><rect x="9.8" y="9" width="2.2" height="1"/><rect x="12.8" y="9" width="2.4" height="1"/><rect x="7.3999999999999995" y="11" width="2.4" height="1"/><rect x="10.6" y="11" width="2.2" height="1"/><rect x="13.6" y="11" width="1.8" height="1"/></g>
<path d="M2.2 11.8 C2.6 14.6 4.6 15.2 7.4 15" fill="none" stroke="#f0001c" stroke-width="1.4"/>
<path d="M6.6 12.2 L9.8 14.8 L6.8 17.4 Z" fill="#f0001c"/>
</svg>
<svg style="left:95px;top:492px" width="22" height="22" viewBox="0 0 22 22">
<rect x="5.6" y="3.6" width="10.9" height="13.9" fill="#fff" stroke="#000" stroke-width="1.3"/>
<g fill="#0000ff" shape-rendering="crispEdges"><rect x="6.8" y="5" width="2.2" height="1"/><rect x="9.8" y="5" width="2.2" height="1"/><rect x="12.8" y="5" width="2.4" height="1"/><rect x="7.3999999999999995" y="7" width="2.4" height="1"/><rect x="10.6" y="7" width="2.2" height="1"/><rect x="13.6" y="7" width="1.8" height="1"/><rect x="6.8" y="9" width="2.2" height="1"/><rect x="9.8" y="9" width="2.2" height="1"/><rect x="12.8" y="9" width="1.6" height="1"/><rect x="7.2" y="11" width="2.4" height="1"/><rect x="10.2" y="11" width="2" height="1"/><rect x="7.6" y="13" width="2.8" height="1"/><rect x="6.8" y="15" width="1.6" height="1"/><rect x="9.4" y="15" width="2.6" height="1"/></g>
<path d="M12.6 14.2 L17.6 7.8" stroke="#00008b" stroke-width="3.2" fill="none"/>
<path d="M12.9 13 L17.2 7.6" stroke="#f0e000" stroke-width="1" stroke-dasharray="1.6 1" fill="none"/>
<path d="M10 16 L12.6 15.4 L11.2 13.6 Z" fill="#ff30e0"/>
</svg>
<svg style="left:119px;top:492px" width="22" height="22" viewBox="0 0 22 22">
<rect x="5" y="3" width="12" height="15" fill="#a9a9a9"/>
<g fill="#cbcbcb"><rect x="6" y="4.2" width="9" height="1.2"/><rect x="5" y="6.4" width="10" height="1.4"/><rect x="6" y="8.6" width="3.4" height="1.2"/><rect x="11" y="8.6" width="3.6" height="1.2"/><rect x="5" y="10" width="4.6" height="1.4"/>
<rect x="6" y="12" width="5" height="1.2"/><rect x="5" y="13.6" width="11" height="1"/><rect x="5" y="15" width="4.6" height="1.2"/><rect x="11" y="15" width="4.4" height="1.2"/></g></svg>
<svg style="left:143px;top:492px" width="22" height="22" viewBox="0 0 22 22">
<path d="M5.4 3 H16.6 V4.6 H16 V16.6 H17 V18 H4.6 V16.6 H5.6 V4.6 H5.4 Z" fill="#a9a9a9"/>
<g fill="#cbcbcb"><rect x="6.4" y="4.2" width="9" height="1.2"/><rect x="5.6" y="6.4" width="1.6" height="1.4"/><rect x="11.8" y="6.4" width="3.4" height="1.4"/><rect x="7" y="8.6" width="2.4" height="1.2"/><rect x="11" y="8.6" width="3.4" height="1.2"/>
<rect x="5.6" y="10.6" width="1.6" height="1.2"/><rect x="12.6" y="10.6" width="2.4" height="1.2"/><rect x="6.6" y="12.6" width="3" height="1.2"/><rect x="12.4" y="12.6" width="2.4" height="1.2"/><rect x="5.6" y="14.6" width="1.6" height="1.2"/><rect x="11.4" y="14.6" width="3.6" height="1.2"/><rect x="7" y="16.4" width="7.6" height="0.8"/></g></svg>
<div style="left:170px;top:493px;width:20px;height:20px;background:#ffff00"></div>
<div class="t l b" style="left:194.00px;top:495px;letter-spacing:0.358px;">- Standardwert</div>
<div class="btn" style="left:693px;top:495px;width:78px;height:18px"></div>
<div class="t l" style="left:701.70px;top:496px;letter-spacing:-0.408px;">Übernehmen</div>
<div style="left:0;top:0;width:160px;height:32.6px;border:6px solid #fb4144;border-radius:8px"></div>
<svg style="left:632.5px;top:19.2px" width="14" height="22" viewBox="0 0 14 22"><path d="M1 1 V17.8 L4.8 14.2 L7.4 19.8 L9.7 18.9 L7.2 13.3 H12.5 Z" fill="#fff" stroke="#000" stroke-width="1" stroke-linejoin="round"/></svg>
<svg style="left:380.5px;top:488px" width="14" height="22" viewBox="0 0 14 22"><path d="M1 1 V17.8 L4.8 14.2 L7.4 19.8 L9.7 18.9 L7.2 13.3 H12.5 Z" fill="#fff" stroke="#000" stroke-width="1" stroke-linejoin="round"/></svg>
</body></html>
